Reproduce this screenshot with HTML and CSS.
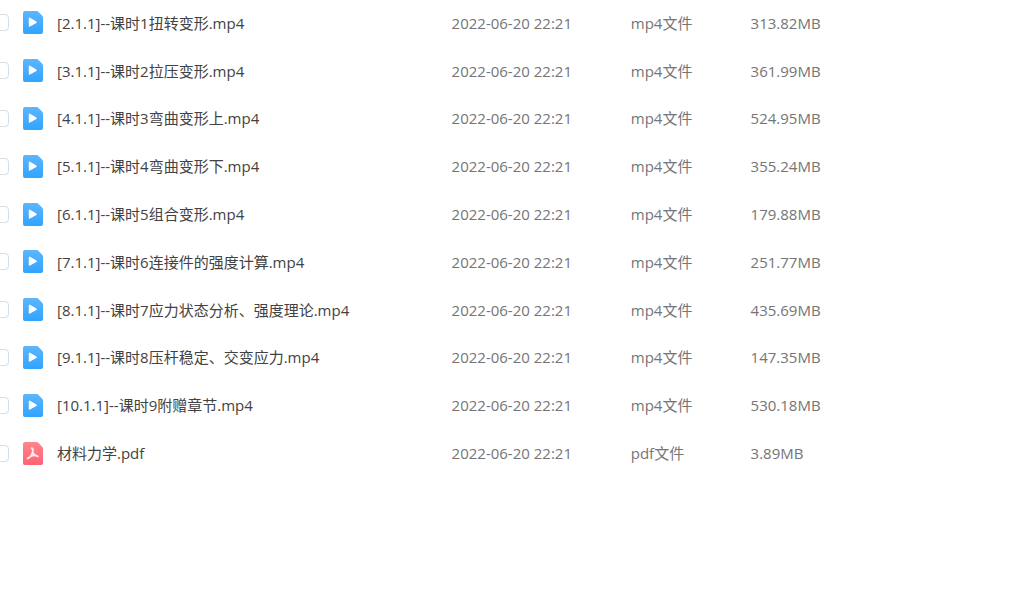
FILE: index.html
```
<!DOCTYPE html>
<html lang="zh-CN">
<head>
    <meta charset="UTF-8">
    <meta name="viewport" content="width=device-width, initial-scale=1.0">
    <title>材料力学</title>
    <link rel="stylesheet" href="styles.css">
</head>
<body>
    <!-- File type icons -->
    <svg class="icon-defs" aria-hidden="true">
        <defs>
            <linearGradient id="blue" x1="0" y1="0" x2="0" y2="1">
                <stop offset="0" stop-color="#5cb6ff"/>
                <stop offset="1" stop-color="#30a4ff"/>
            </linearGradient>
            <linearGradient id="red" x1="0" y1="0" x2="0" y2="1">
                <stop offset="0" stop-color="#ff8588"/>
                <stop offset="1" stop-color="#ff6376"/>
            </linearGradient>
        </defs>
        <symbol id="video" viewBox="0 0 20 23">
            <path fill="url(#blue)" d="M2 0h11.6q.9 0 1.5.6l4.3 4.3q.6.6.6 1.5V21q0 2-2 2H2q-2 0-2-2V2Q0 0 2 0z"/>
            <path fill="#fff" stroke="#fff" stroke-width="1.6" stroke-linejoin="round" d="M6.6 7.5v7.4L13 11.2z"/>
        </symbol>
        <symbol id="pdf" viewBox="0 0 20 23">
            <path fill="url(#red)" d="M2 0h11.6q.9 0 1.5.6l4.3 4.3q.6.6.6 1.5V21q0 2-2 2H2q-2 0-2-2V2Q0 0 2 0z"/>
            <path fill="none" stroke="#fff" stroke-opacity=".85" stroke-width="1.9" stroke-linecap="round" stroke-linejoin="round" d="M8.6 6.2q1.6 0 1.2 2.6-.2 3-1.8 5-1.6 2-3.4 2.6M9.6 10.4q1.2 3 5.2 4M7.6 14.3q2.4-1.2 4.6-.8"/>
        </symbol>
    </svg>
    <table class="file-list">
        <colgroup>
            <col class="col-name">
            <col class="col-date">
            <col class="col-type">
            <col class="col-size">
        </colgroup>
        <tbody>
            <tr>
                <td><div class="file"><input type="checkbox" id="f1"><svg class="icon"><use href="#video"/></svg><label for="f1">[2.1.1]--课时1扭转变形.mp4</label></div></td>
                <td>2022-06-20 22:21</td>
                <td>mp4文件</td>
                <td>313.82MB</td>
            </tr>
            <tr>
                <td><div class="file"><input type="checkbox" id="f2"><svg class="icon"><use href="#video"/></svg><label for="f2">[3.1.1]--课时2拉压变形.mp4</label></div></td>
                <td>2022-06-20 22:21</td>
                <td>mp4文件</td>
                <td>361.99MB</td>
            </tr>
            <tr>
                <td><div class="file"><input type="checkbox" id="f3"><svg class="icon"><use href="#video"/></svg><label for="f3">[4.1.1]--课时3弯曲变形上.mp4</label></div></td>
                <td>2022-06-20 22:21</td>
                <td>mp4文件</td>
                <td>524.95MB</td>
            </tr>
            <tr>
                <td><div class="file"><input type="checkbox" id="f4"><svg class="icon"><use href="#video"/></svg><label for="f4">[5.1.1]--课时4弯曲变形下.mp4</label></div></td>
                <td>2022-06-20 22:21</td>
                <td>mp4文件</td>
                <td>355.24MB</td>
            </tr>
            <tr>
                <td><div class="file"><input type="checkbox" id="f5"><svg class="icon"><use href="#video"/></svg><label for="f5">[6.1.1]--课时5组合变形.mp4</label></div></td>
                <td>2022-06-20 22:21</td>
                <td>mp4文件</td>
                <td>179.88MB</td>
            </tr>
            <tr>
                <td><div class="file"><input type="checkbox" id="f6"><svg class="icon"><use href="#video"/></svg><label for="f6">[7.1.1]--课时6连接件的强度计算.mp4</label></div></td>
                <td>2022-06-20 22:21</td>
                <td>mp4文件</td>
                <td>251.77MB</td>
            </tr>
            <tr>
                <td><div class="file"><input type="checkbox" id="f7"><svg class="icon"><use href="#video"/></svg><label for="f7">[8.1.1]--课时7应力状态分析、强度理论.mp4</label></div></td>
                <td>2022-06-20 22:21</td>
                <td>mp4文件</td>
                <td>435.69MB</td>
            </tr>
            <tr>
                <td><div class="file"><input type="checkbox" id="f8"><svg class="icon"><use href="#video"/></svg><label for="f8">[9.1.1]--课时8压杆稳定、交变应力.mp4</label></div></td>
                <td>2022-06-20 22:21</td>
                <td>mp4文件</td>
                <td>147.35MB</td>
            </tr>
            <tr>
                <td><div class="file"><input type="checkbox" id="f9"><svg class="icon"><use href="#video"/></svg><label for="f9">[10.1.1]--课时9附赠章节.mp4</label></div></td>
                <td>2022-06-20 22:21</td>
                <td>mp4文件</td>
                <td>530.18MB</td>
            </tr>
            <tr>
                <td><div class="file"><input type="checkbox" id="f10"><svg class="icon"><use href="#pdf"/></svg><label for="f10">材料力学.pdf</label></div></td>
                <td>2022-06-20 22:21</td>
                <td>pdf文件</td>
                <td>3.89MB</td>
            </tr>
        </tbody>
    </table>
</body>
</html>
```
FILE: styles.css
```
body {
    margin: 0;
    background-color: #fff;
    font-family: "Open Sans", "Noto Sans CJK SC", sans-serif;
    font-size: 15px;
    line-height: 20px;
    color: #757575;
    overflow-x: hidden;
}
.icon-defs {
    position: absolute;
    width: 0;
    height: 0;
}
/* Rows share the height of the list evenly */
.file-list {
    width: 100%;
    height: 478px;
    margin-top: -1px;
    table-layout: fixed;
    border-collapse: collapse;
}
.col-name {
    width: 44.1%;
}
.col-date {
    width: 17.5%;
}
.col-type {
    width: 11.7%;
}
td {
    padding: 0;
    white-space: nowrap;
}
.file {
    display: flex;
    align-items: center;
    color: #424242;
}
.file input {
    appearance: none;
    flex: none;
    box-sizing: border-box;
    width: 17px;
    height: 17px;
    margin: 0 14px 0 -8px;
    border: 1px solid #d0dfea;
    border-radius: 4px;
    background-color: #fff;
}
.file input:checked {
    background-color: #30a4ff;
}
.icon {
    flex: none;
    width: 20px;
    height: 23px;
    margin-right: 14px;
}
```
